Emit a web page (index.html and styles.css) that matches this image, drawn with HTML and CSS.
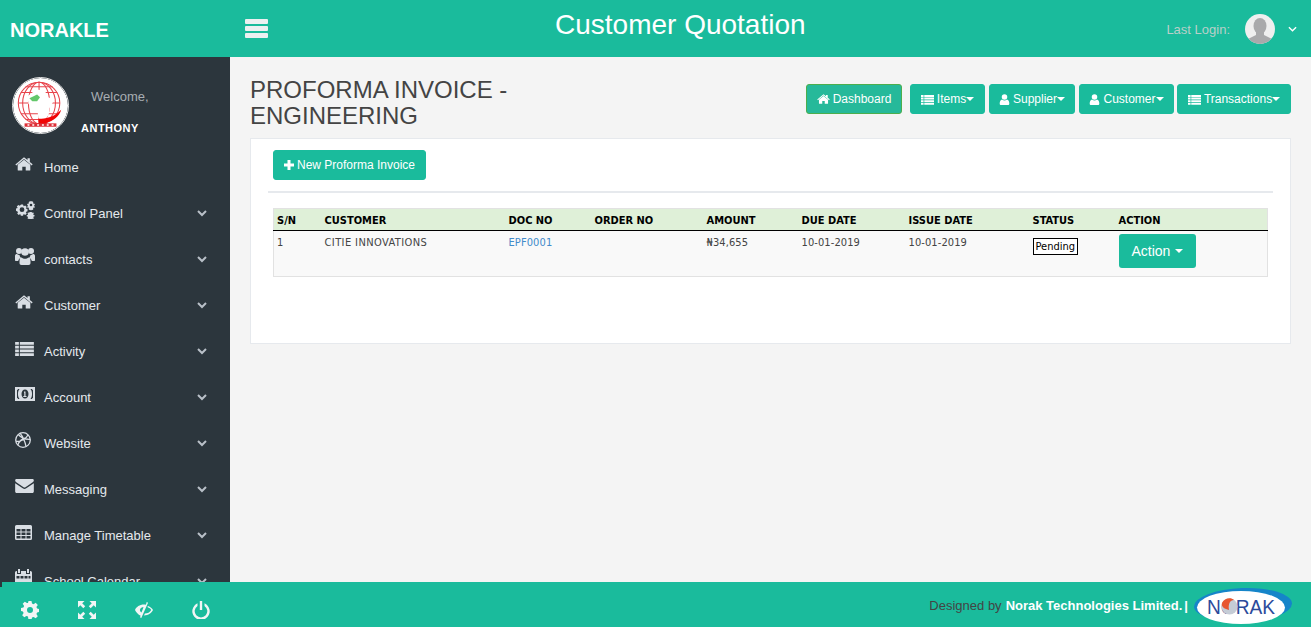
FILE: index.html
```html
<!DOCTYPE html>
<html lang="en">
<head>
    <meta charset="UTF-8">
    <meta name="viewport" content="width=device-width, initial-scale=1.0">
    <title>Customer Quotation</title>
    <link rel="stylesheet" href="styles.css">
</head>
<body>
    <svg class="icon-defs" width="0" height="0">
        <symbol id="i-home" viewBox="0 0 20 16"><path d="M10 2.600 3 8.400V14a.7.7 0 0 0 .7.7h4.400v-4.300h3.800v4.300h4.400A.7.7 0 0 0 17 14V8.400z"/><path d="M10 0 .4 8l1 1.200L10 2l8.600 7 1-1.200L16.500 5.300V1h-2.600v2.100z"/></symbol>
        <symbol id="i-list" viewBox="0 0 20 16"><path d="M0 1h4v3H0zM5 1h15v3H5zM0 5h4v3H0zM5 5h15v3H5zM0 9h4v3H0zM5 9h15v3H5zM0 13h4v3H0zM5 13h15v3H5z"/></symbol>
        <symbol id="i-user" viewBox="0 0 14 16"><circle cx="7" cy="4.500" r="4"/><path d="M3.500 8C1 8.500 0 11 0 14c0 1.200.8 2 2 2h10c1.200 0 2-.8 2-2 0-3-1-5.500-3.500-6-1 1-2.200 1.500-3.500 1.500S4.500 9 3.500 8z"/></symbol>
        <symbol id="chev" viewBox="0 0 10 7"><path d="M1 1l4 4 4-4" fill="none" stroke="#b9c0c8" stroke-width="2"/></symbol>
    </svg>

    <header class="topbar">
        <div class="brand">NORAKLE</div>
        <svg class="burger" viewBox="0 0 23 19"><path d="M1 0h21a1 1 0 0 1 1 1v3a1 1 0 0 1-1 1H1a1 1 0 0 1-1-1V1a1 1 0 0 1 1-1zM1 7h21a1 1 0 0 1 1 1v3a1 1 0 0 1-1 1H1a1 1 0 0 1-1-1V8a1 1 0 0 1 1-1zM1 14h21a1 1 0 0 1 1 1v3a1 1 0 0 1-1 1H1a1 1 0 0 1-1-1v-3a1 1 0 0 1 1-1z"/></svg>
        <h1 class="page-title">Customer Quotation</h1>
        <div class="last-login">
            <span class="last-login-text">Last Login:</span>
            <svg class="avatar" viewBox="0 0 30 30"><defs><clipPath id="avatar-clip"><circle cx="15" cy="15" r="15"/></clipPath></defs><circle cx="15" cy="15" r="15" fill="#efefef"/><g clip-path="url(#avatar-clip)" fill="#a9a9ab"><ellipse cx="15" cy="12" rx="6.500" ry="8"/><path d="M11 18h8v3l8 4v5H3v-5l8-4z"/></g></svg>
            <svg class="caret-small" viewBox="0 0 10 6"><path d="M1 1l4 4 4-4" fill="none" stroke="#fff" stroke-width="1.500"/></svg>
        </div>
    </header>

    <div class="middle">
        <aside class="sidebar">
            <div class="profile">
                <svg class="profile-logo" viewBox="0 0 57 57">
                    <circle cx="28.500" cy="28.500" r="28.500" fill="#fff"/>
                    <g fill="none" stroke="#e8444c" stroke-width="1.100">
                        <circle cx="27" cy="26" r="21.500"/>
                        <ellipse cx="27" cy="26" rx="11" ry="21.500"/>
                        <ellipse cx="27" cy="26" rx="17" ry="21.500"/>
                        <path d="M5.500 26h43M8 15h38M8 37h38M13 9h28M13 43h28M27 4.500v43"/>
                    </g>
                    <path d="M15 19l9-7 9 1 3 7 7 2-5 9-1 7-6 8-4-1-2-13-9-5z" fill="#fff"/>
                    <path d="M17 21l8-4 3 3-3 4h-5z" fill="#63c76a"/>
                    <path d="M26 42c9 1 17-2 24-9-2 7-9 12-15 13v3h-8z" fill="#f00505"/>
                    <rect x="12" y="47" width="33" height="3.500" fill="#dc2e36"/>
                    <path d="M15 48h2v1.500h-2zM20 48h2v1.500h-2zM25 48h2v1.500h-2zM30 48h2v1.500h-2zM35 48h2v1.500h-2zM40 48h2v1.500h-2z" fill="#fff"/>
                </svg>
                <div class="profile-text">
                    <div class="welcome">Welcome,</div>
                    <div class="username">ANTHONY</div>
                </div>
            </div>
            <ul class="side-menu">
                <li>
                    <span class="side-ico"><svg width="18" height="15"><use href="#i-home"/></svg></span>
                    <span class="side-label">Home</span>
                </li>
                <li>
                    <span class="side-ico"><svg width="20" height="18" viewBox="0 0 20 18"><path fill-rule="evenodd" d="M6 3.500l2 .1.700 1.700 1.500-.9 1.500 1.500-.9 1.500 1.700.7v2.100l-1.700.7.900 1.500-1.500 1.500-1.500-.9-.7 1.700H5.900l-.7-1.700-1.500.9-1.500-1.500.9-1.500L1 9.700V7.600l1.700-.7-.9-1.500 1.500-1.500 1.500.9zM7 6.300a2.400 2.400 0 1 0 0 4.800 2.400 2.400 0 0 0 0-4.800z"/><path fill-rule="evenodd" d="M16 0l1 .6.800-.2.600.9-.4.800.7.700.9-.1.300 1-.7.500v1l.7.500-.3 1-.9-.1-.7.700.4.800-.6.900-.8-.2-1 .6-1-.6-.8.200-.6-.9.400-.8-.7-.7-.9.100-.3-1 .7-.5v-1l-.7-.5.300-1 .9.100.7-.7-.4-.8.600-.9.800.2zm0 2.700a1.300 1.300 0 1 0 0 2.600 1.300 1.300 0 0 0 0-2.600zM16.500 11l.8.700 1-.2.500 1-.6.800.5.800.9.100v1.100l-.9.100-.5.800.6.800-.5 1-1-.2-.8.700-.9-.4-.8.400-.8-.7-1 .2-.5-1 .6-.8-.5-.8-.9-.1v-1.100l.9-.1.500-.8-.6-.8.500-1 1 .2.800-.7z"/></svg></span>
                    <span class="side-label">Control Panel</span>
                    <svg class="chev"><use href="#chev"/></svg>
                </li>
                <li>
                    <span class="side-ico"><svg width="20" height="18" viewBox="0 0 20 18"><circle cx="4" cy="4" r="3"/><circle cx="16" cy="4" r="3"/><circle cx="10" cy="5" r="3.800"/><path d="M0 9c0-1.500 1-2 2-2 .8.700 1.500 1 2.500 1 .1 1.200.7 2.100 1.500 2.700-1.500.6-2.500 1.700-2.800 3.300H1c-.6 0-1-.4-1-1zM20 9c0-1.500-1-2-2-2-.8.700-1.500 1-2.500 1-.1 1.200-.7 2.100-1.500 2.700 1.500.6 2.500 1.700 2.800 3.300H19c.6 0 1-.4 1-1zM6.500 10.500c1 .9 2.200 1.300 3.500 1.300s2.500-.4 3.500-1.300c1.500.2 2 1.500 2 4v1.500c0 1-.7 2-2 2h-7c-1.300 0-2-1-2-2v-1.500c0-2.500.5-3.800 2-4z"/></svg></span>
                    <span class="side-label">contacts</span>
                    <svg class="chev"><use href="#chev"/></svg>
                </li>
                <li>
                    <span class="side-ico"><svg width="18" height="15"><use href="#i-home"/></svg></span>
                    <span class="side-label">Customer</span>
                    <svg class="chev"><use href="#chev"/></svg>
                </li>
                <li>
                    <span class="side-ico"><svg width="19" height="15"><use href="#i-list"/></svg></span>
                    <span class="side-label">Activity</span>
                    <svg class="chev"><use href="#chev"/></svg>
                </li>
                <li>
                    <span class="side-ico"><svg width="20" height="14" viewBox="0 0 20 14"><path fill-rule="evenodd" d="M0 0h20v14H0zM3 2a1 1 0 0 1-1 1v8a1 1 0 0 1 1 1h1.500C3.200 10.500 3 8.500 3 7s.2-3.500 1.500-5zM15.500 2C16.800 3.500 17 5.500 17 7s-.2 3.500-1.500 5H17a1 1 0 0 1 1-1V3a1 1 0 0 1-1-1zM10 2.500c-2 0-3.500 2-3.500 4.500s1.500 4.500 3.500 4.500 3.500-2 3.500-4.500-1.500-4.500-3.500-4.500z"/><path d="M9 4.500h1.500V9h1v1h-3.200V9h1V5.700H9z"/></svg></span>
                    <span class="side-label">Account</span>
                    <svg class="chev"><use href="#chev"/></svg>
                </li>
                <li>
                    <span class="side-ico"><svg width="16" height="16" viewBox="0 0 16 16"><g fill="none" stroke="#d9dee4" stroke-width="1.300"><circle cx="8" cy="8" r="7.300"/><path d="M5 1.200c2.500 3 5 8 6 13.500M1 9.500C5.500 9.500 10.500 7.500 13 3M3.500 2.800c3 3.300 8 4.800 11.800 4.500M2.800 13c1-3.500 4-6 8-7"/></g></svg></span>
                    <span class="side-label">Website</span>
                    <svg class="chev"><use href="#chev"/></svg>
                </li>
                <li>
                    <span class="side-ico"><svg width="19" height="14" viewBox="0 0 20 15"><path d="M1.500 0h17C19.500 0 20 .7 20 1.500c0 .8-.5 1.500-1.200 2L11 8.800c-.6.400-1.400.4-2 0L1.200 3.500C.5 3 0 2.300 0 1.500 0 .7.500 0 1.500 0zM0 4.500l8.500 5.800c1 .6 2 .6 3 0L20 4.500v8.900c0 .9-.7 1.600-1.500 1.600h-17C.7 15 0 14.300 0 13.400z"/></svg></span>
                    <span class="side-label">Messaging</span>
                    <svg class="chev"><use href="#chev"/></svg>
                </li>
                <li>
                    <span class="side-ico"><svg width="17" height="15" viewBox="0 0 17 15"><path fill-rule="evenodd" d="M1.500 0h14A1.500 1.500 0 0 1 17 1.500v12a1.500 1.500 0 0 1-1.500 1.500h-14A1.500 1.500 0 0 1 0 13.500v-12A1.500 1.500 0 0 1 1.500 0zM1.500 4v2.500h4V4zm5 0v2.500h4V4zm5 0v2.500h4V4zm-10 3.500V10h4V7.500zm5 0V10h4V7.500zm5 0V10h4V7.500zm-10 3.500v2.500h4V11zm5 0v2.500h4V11zm5 0v2.500h4V11z"/></svg></span>
                    <span class="side-label">Manage Timetable</span>
                    <svg class="chev"><use href="#chev"/></svg>
                </li>
                <li>
                    <span class="side-ico"><svg width="17" height="18" viewBox="0 0 17 18"><path fill-rule="evenodd" d="M3 0h2v4H3zM12 0h2v4h-2zM1.500 2H2v3h4V2h5v3h4V2h.5A1.500 1.500 0 0 1 17 3.500v13a1.500 1.500 0 0 1-1.500 1.500h-14A1.500 1.500 0 0 1 0 16.500v-13A1.500 1.500 0 0 1 1.500 2zM1.500 7v2.500h3V7zm4 0v2.500h3V7zm4 0v2.500h3V7zm4 0v2.500h2V7z"/></svg></span>
                    <span class="side-label">School Calendar</span>
                    <svg class="chev"><use href="#chev"/></svg>
                </li>
            </ul>
        </aside>

        <main class="content">
            <div class="content-head">
                <h2 class="section-title">PROFORMA INVOICE - ENGINEERING</h2>
                <nav class="head-buttons">
                    <a class="btn btn-active btn-dash"><svg class="btn-icon home-ic"><use href="#i-home"/></svg>Dashboard</a>
                    <a class="btn btn-items"><svg class="btn-icon"><use href="#i-list"/></svg>Items<i class="caret"></i></a>
                    <a class="btn btn-supplier"><svg class="btn-icon user-ic"><use href="#i-user"/></svg>Supplier<i class="caret"></i></a>
                    <a class="btn btn-customer"><svg class="btn-icon user-ic"><use href="#i-user"/></svg>Customer<i class="caret"></i></a>
                    <a class="btn btn-trans"><svg class="btn-icon"><use href="#i-list"/></svg>Transactions<i class="caret"></i></a>
                </nav>
            </div>
            <section class="panel">
                <a class="btn btn-new"><svg class="plus" viewBox="0 0 10 10"><path d="M3.500 0h3v3.500H10v3H6.500V10h-3V6.500H0v-3h3.500z"/></svg>New Proforma Invoice</a>
                <div class="panel-rule"></div>
                <table class="data-table">
                    <thead>
                        <tr>
                            <th class="c-sn">S/N</th>
                            <th class="c-customer">CUSTOMER</th>
                            <th class="c-doc">DOC NO</th>
                            <th class="c-order">ORDER NO</th>
                            <th class="c-amount">AMOUNT</th>
                            <th class="c-due">DUE DATE</th>
                            <th class="c-issue">ISSUE DATE</th>
                            <th class="c-status">STATUS</th>
                            <th>ACTION</th>
                        </tr>
                    </thead>
                    <tbody>
                        <tr>
                            <td>1</td>
                            <td class="cell-customer">CITIE INNOVATIONS</td>
                            <td><a class="doc-link">EPF0001</a></td>
                            <td></td>
                            <td>₦34,655</td>
                            <td>10-01-2019</td>
                            <td>10-01-2019</td>
                            <td><span class="status">Pending</span></td>
                            <td><a class="btn-action">Action <i class="caret"></i></a></td>
                        </tr>
                    </tbody>
                </table>
            </section>
        </main>
    </div>

    <footer class="footer">
        <div class="footer-tools">
            <svg viewBox="0 0 18 18"><path fill-rule="evenodd" d="M7.500 0h3l.5 2.500 1.600.7 2.100-1.400 2.100 2.100-1.400 2.100.7 1.600 2.400.4v3l-2.400.5-.7 1.600 1.400 2.100-2.100 2.100-2.100-1.400-1.600.7-.5 2.400h-3L7 15.600l-1.600-.7-2.100 1.400-2.100-2.100 1.400-2.100-.7-1.600L0 10V7l2.400-.5.700-1.600-1.400-2.100 2.100-2.100 2.100 1.400L7 1.900zM9 6a3 3 0 1 0 0 6 3 3 0 0 0 0-6z"/></svg>
            <svg viewBox="0 0 18 18"><path d="M0 0h6.500L4.200 2.300l3 3-1.900 1.900-3-3L0 6.500zM18 0v6.500l-2.300-2.300-3 3-1.900-1.900 3-3L11.500 0zM0 18v-6.500l2.300 2.300 3-3 1.900 1.900-3 3L6.500 18zM18 18h-6.500l2.300-2.300-3-3 1.900-1.900 3 3 2.300-2.300z"/></svg>
            <svg viewBox="0 0 20 18"><path fill-rule="evenodd" d="M13 0l1.500.9L7 18l-1.500-.9.800-1.700C3.500 14 1.300 11.800 0 9c1.500-3.300 5-6 10-6 .8 0 1.500.1 2.200.2zM7 6.500c-1 .7-1.500 1.500-1.500 2.500 0 1.200.7 2.200 1.700 2.700L9.500 6c-1 0-1.800 0-2.500.5zM14.500 4.500C17 5.500 19 7.200 20 9c-1.500 3.300-5 6-10 6l1-2c3 0 5.500-1.500 7-4-.8-1.300-2-2.300-4.300-3.200z"/></svg>
            <svg viewBox="0 0 18 18"><path d="M7.800 0h2.400v9H7.800z"/><path d="M5.500 2.300v2.600A6.300 6.300 0 1 0 12.500 4.900V2.300a8.700 8.700 0 1 1-7 0z"/></svg>
        </div>
        <div class="footer-credit">
            <span class="designed">Designed by</span>
            <strong class="company">Norak Technologies Limited.</strong>
            <strong>|</strong>
            <svg class="norak-logo" viewBox="0 0 100 38">
                <ellipse cx="50" cy="18" rx="49" ry="17" fill="#1585c9" transform="rotate(-2 50 18)"/>
                <ellipse cx="48" cy="20.500" rx="44" ry="16.500" fill="#fff"/>
                <text class="norak-text" x="14" y="27" textLength="68" lengthAdjust="spacingAndGlyphs">NORAK</text>
                <circle cx="36.500" cy="19.500" r="8" fill="#c5ccd6"/>
                <path d="M29 16c2-5 9-6 12-3-4 0-6 4-5 10-4-1-8-3-7-7z" fill="#e8562f"/>
            </svg>
        </div>
    </footer>
</body>
</html>
```

FILE: styles.css
```css
* {
    box-sizing: border-box;
}
html, body {
    height: 100%;
}
body {
    margin: 0;
    display: flex;
    flex-direction: column;
    height: 627px;
    overflow: hidden;
    font-family: "Liberation Sans", Arial, sans-serif;
    font-size: 13px;
    color: #333;
    background: #f4f4f4;
}
.icon-defs {
    position: absolute;
}

/* top bar */
.topbar {
    flex: 0 0 57px;
    display: flex;
    align-items: center;
    background: #1abb9c;
    color: #fff;
}
.brand {
    width: 245px;
    padding: 3px 0 0 10px;
    font-size: 20px;
    font-weight: bold;
}
.burger {
    width: 23px;
    height: 19px;
    fill: #ecf0f1;
}
.page-title {
    margin: 0 0 7px 287px;
    font-size: 28px;
    font-weight: normal;
    line-height: 36px;
}
.last-login {
    margin-left: auto;
    display: flex;
    align-items: center;
    padding-right: 14px;
    color: #b9cfc9;
    font-size: 13px;
}
.last-login-text {
    padding-top: 2px;
}
.avatar {
    width: 30px;
    height: 30px;
    margin-left: 15px;
}
.caret-small {
    width: 9px;
    height: 6px;
    margin-left: 13px;
}

/* sidebar */
.middle {
    flex: 1;
    display: flex;
    min-height: 0;
}
.sidebar {
    flex: 0 0 230px;
    background: #2c363d;
    overflow: hidden;
}
.profile {
    display: flex;
    height: 87px;
    padding: 20px 0 0 12px;
}
.profile-logo {
    flex: 0 0 57px;
    width: 57px;
    height: 57px;
    border: 1px solid #e6e6e6;
    border-radius: 50%;
}
.profile-text {
    margin-left: 12px;
}
.welcome {
    margin: 12px 0 0 10px;
    color: #a7adb2;
    font-size: 13px;
}
.username {
    margin-top: 18px;
    color: #fff;
    font-size: 11px;
    font-weight: bold;
    letter-spacing: .5px;
}
.side-menu {
    margin: 0;
    padding: 0;
    list-style: none;
}
.side-menu li {
    display: flex;
    align-items: center;
    height: 46px;
    padding-left: 15px;
    color: #e5e9ed;
    font-size: 13px;
}
.side-ico {
    flex: 0 0 29px;
    display: flex;
    margin-top: -6px;
    fill: #d9dee4;
}
.side-label {
    flex: 1;
}
.chev {
    width: 10px;
    height: 7px;
    margin-right: 23px;
}

/* main content */
.content {
    flex: 1;
    padding: 0 20px;
}
.content-head {
    display: flex;
    justify-content: space-between;
    height: 81px;
    padding-top: 20px;
}
.section-title {
    width: 300px;
    margin: 0;
    color: #444;
    font-size: 24px;
    font-weight: normal;
    line-height: 26px;
}
.head-buttons {
    display: flex;
    gap: 4px;
    margin-top: 7px;
}
.btn {
    display: inline-flex;
    align-items: center;
    justify-content: center;
    height: 30px;
    padding: 0 10px;
    border: 1px solid #1abb9c;
    border-radius: 3px;
    background: #1abb9c;
    color: #fff;
    font-size: 12px;
}
.btn-active {
    margin-right: 4px;
    border-color: #4cae4c;
    background: #26b99a;
}
.btn-dash { width: 96px; padding: 0; }
.btn-items { width: 75px; padding: 0; }
.btn-supplier { width: 86px; padding: 0; }
.btn-customer { width: 95px; padding: 0; margin-right: -1px; }
.btn-trans { width: 114px; padding: 0; }
.btn-icon {
    width: 13px;
    height: 11px;
    margin-right: 3px;
    fill: #fff;
}
.home-ic {
    width: 13px;
}
.user-ic {
    width: 11px;
}
.caret {
    display: inline-block;
    width: 0;
    height: 0;
    border-top: 4px solid #fff;
    border-left: 4px solid transparent;
    border-right: 4px solid transparent;
}
.panel {
    height: 206px;
    padding: 11px 22px 0 22px;
    border: 1px solid #e6e9ed;
    background: #fff;
}
.btn-new {
    padding: 0 10px;
}
.plus {
    width: 10px;
    height: 10px;
    margin-right: 3px;
    fill: #fff;
}
.panel-rule {
    height: 2px;
    margin: 11px -5px 15px -5px;
    background: #e6e9ed;
}

/* table */
.data-table {
    width: 100%;
    border-collapse: collapse;
    border: 1px solid #e2e2e2;
    font-family: "DejaVu Sans Condensed", "DejaVu Sans", sans-serif;
    font-size: 11px;
    table-layout: fixed;
}
.data-table th {
    height: 22px;
    padding: 1px 3px 0;
    border-bottom: 1px solid #000;
    background: #dff0d8;
    color: #000;
    text-align: left;
}
.data-table td {
    height: 46px;
    padding: 5px 3px 4px;
    background: #f9f9f9;
    color: #444;
    letter-spacing: .1px;
    vertical-align: top;
}
.data-table .cell-customer {
    letter-spacing: .4px;
}
.c-sn { width: 48px; }
.c-customer { width: 184px; }
.c-doc { width: 86px; }
.c-order { width: 112px; }
.c-amount { width: 95px; }
.c-due { width: 107px; }
.c-issue { width: 124px; }
.c-status { width: 86px; }
.doc-link {
    color: #428bca;
}
.status {
    display: inline-block;
    margin-top: 2px;
    padding: 1px 2px;
    border: 1px solid #000;
    background: #fff;
    color: #000;
    letter-spacing: 0;
}
.btn-action {
    display: inline-flex;
    align-items: center;
    gap: 5px;
    height: 34px;
    margin-top: -2px;
    padding: 0 13px;
    border-radius: 3px;
    background: #1abb9c;
    color: #fff;
    font-family: "Liberation Sans", Arial, sans-serif;
    font-size: 14px;
    letter-spacing: 0;
}

/* footer */
.footer {
    position: relative;
    flex: 0 0 45px;
    display: flex;
    align-items: center;
    justify-content: space-between;
    background: #1abb9c;
    color: #fff;
}
.footer::before {
    content: "";
    position: absolute;
    left: 0;
    top: 0;
    width: 2px;
    height: 5px;
    background: #2c363d;
}
.footer-tools {
    display: flex;
    gap: 39px;
    padding: 10px 0 0 21px;
}
.footer-tools svg {
    width: 18px;
    height: 18px;
    fill: #f2f5f5;
}
.footer-credit {
    display: flex;
    align-items: center;
    gap: 4px;
    padding: 2px 18px 0 0;
    font-size: 13px;
}
.designed {
    color: #444;
}
.company {
    margin-right: -2px;
}
.norak-logo {
    width: 100px;
    height: 38px;
    margin: 0 0 0 1px;
}
.norak-text {
    fill: #2b4a9b;
    font-family: "Liberation Sans", Arial, sans-serif;
    font-size: 20px;
}
```
